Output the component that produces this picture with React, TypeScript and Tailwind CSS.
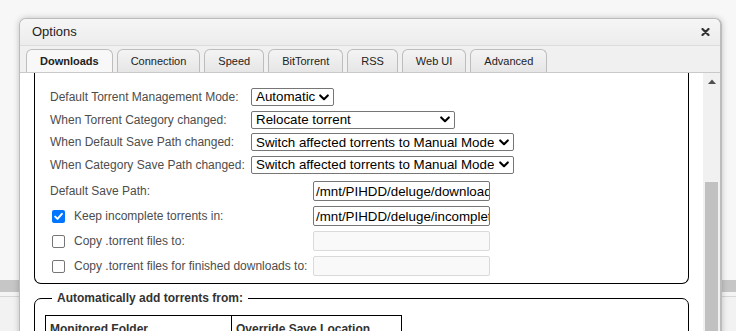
import React from "react";

const Chevron = () => (
  <svg width="10" height="7" viewBox="0 0 10 7" className="shrink-0">
    <path d="M1.2 1.4 L5 5.2 L8.8 1.4" fill="none" stroke="#000" strokeWidth="2.1" strokeLinecap="round" strokeLinejoin="round" />
  </svg>
);

function Select({ value, width }: { value: string; width: string }) {
  return (
    <div className={`${width} h-[18px] flex items-center justify-between border border-[#767676] rounded-[2px] bg-white pl-[4px] pr-[4px] text-[13.33px] leading-none text-black`}>
      <span className="whitespace-nowrap overflow-hidden">{value}</span>
      <Chevron />
    </div>
  );
}

function TextInput({ value, disabled }: { value?: string; disabled?: boolean }) {
  return (
    <div
      className={`w-[177px] h-[20px] flex items-center rounded-[2px] overflow-hidden pl-[2px] text-[13.33px] leading-none text-black whitespace-nowrap ${
        disabled ? "border border-[#dadada] bg-[#f9f9f9]" : "border border-[#767676] bg-white"
      }`}
    >
      {value}
    </div>
  );
}

function Checkbox({ checked }: { checked?: boolean }) {
  return checked ? (
    <div className="w-[13px] h-[13px] rounded-[2px] bg-[#0075ff] flex items-center justify-center">
      <svg width="11" height="11" viewBox="0 0 11 11">
        <path d="M2.2 5.6 L4.5 7.9 L8.9 2.8" fill="none" stroke="#fff" strokeWidth="2" strokeLinecap="round" strokeLinejoin="round" />
      </svg>
    </div>
  ) : (
    <div className="w-[13px] h-[13px] rounded-[2px] border border-[#767676] bg-white" />
  );
}

const tabs = ["Downloads", "Connection", "Speed", "BitTorrent", "RSS", "Web UI", "Advanced"];

export default function App() {
  return (
    <div className="relative w-[736px] h-[331px] overflow-hidden bg-[#f7f7f7] font-['Liberation_Sans',Arial,sans-serif]">
      {/* background page */}
      <div className="flex flex-col h-full">
        <div className="h-[280px]" />
        <div className="h-[12px] bg-[#c6c6c6]" />
        <div className="h-[5px] bg-[#f4f4f4] border-b border-[#d6d6d6]" />
        <div className="flex-1 bg-[#f2f2f2]" />
      </div>

      {/* dialog */}
      <div className="absolute left-[19px] top-[18px] w-[703px] h-[330px] flex flex-col rounded-t-[7px] border border-[#bcbcbc] border-r-[2px] bg-[#efefef] shadow-[0_0_6px_rgba(0,0,0,0.22)] overflow-hidden">
        {/* title */}
        <div className="h-[27px] shrink-0 flex items-center justify-between pl-[12px] pr-[10px] bg-gradient-to-b from-[#f6f6f6] to-[#ececec] border-b border-[#dcdcdc]">
          <span className="text-[13px] text-[#222]">Options</span>
          <svg width="9" height="8" viewBox="0 0 9 8">
            <path d="M1.5 1 L7.5 7 M7.5 1 L1.5 7" stroke="#333" strokeWidth="2.2" strokeLinecap="round" />
          </svg>
        </div>
        {/* tabs */}
        <div className="h-[27px] shrink-0 flex items-end gap-[4px] pl-[6px] bg-[#f0f0f0] border-b border-[#c9c9c9]">
          {tabs.map((t, i) => (
            <div
              key={t}
              className={`h-[23px] flex items-center px-[13px] rounded-t-[6px] border border-b-0 border-[#bdbdbd] text-[11px] text-[#222] ${
                i === 0 ? "bg-[#f8f8f8] font-bold" : "bg-gradient-to-b from-[#f4f4f4] to-[#e6e6e6]"
              }`}
            >
              {t}
            </div>
          ))}
        </div>
        {/* content */}
        <div className="flex-1 flex bg-white">
          <div className="flex-1 flex flex-col pl-[14px] pr-[14px]">
            {/* fieldset 1 (top scrolled off) */}
            <div className="w-[655px] border-x border-b border-black rounded-b-[7px] pl-[15px] pt-[15px] pb-[7px] flex flex-col">
              <div className="flex flex-col gap-[4.67px]">
                {[
                  ["Default Torrent Management Mode:", "Automatic", "w-[83px]"],
                  ["When Torrent Category changed:", "Relocate torrent", "w-[204px]"],
                  ["When Default Save Path changed:", "Switch affected torrents to Manual Mode", "w-[263px]"],
                  ["When Category Save Path changed:", "Switch affected torrents to Manual Mode", "w-[263px]"],
                ].map(([label, value, w]) => (
                  <div key={label} className="flex items-center h-[18px]">
                    <span className="w-[201px] shrink-0 text-[12px] text-[#4d4d4d] whitespace-nowrap">{label}</span>
                    <Select value={value} width={w} />
                  </div>
                ))}
              </div>
              <div className="flex flex-col gap-[5px] mt-[7.5px]">
                <div className="flex items-center h-[20px]">
                  <span className="w-[263px] shrink-0 text-[12px] text-[#4d4d4d]">Default Save Path:</span>
                  <TextInput value="/mnt/PIHDD/deluge/downloads" />
                </div>
                {[
                  ["Keep incomplete torrents in:", true, "/mnt/PIHDD/deluge/incomplete"],
                  ["Copy .torrent files to:", false, ""],
                  ["Copy .torrent files for finished downloads to:", false, ""],
                ].map(([label, checked, value]) => (
                  <div key={label as string} className="flex items-center h-[20px]">
                    <div className="w-[263px] shrink-0 flex items-center pl-[2px]">
                      <Checkbox checked={checked as boolean} />
                      <span className="ml-[9px] text-[12px] text-[#4d4d4d] whitespace-nowrap">{label as string}</span>
                    </div>
                    <TextInput value={value as string} disabled={!checked} />
                  </div>
                ))}
              </div>
            </div>
            {/* fieldset 2 */}
            <fieldset className="w-[655px] mt-[5px] border border-black rounded-t-[7px] pl-[10px] pt-[8px] h-[60px]">
              <legend className="ml-[7px] px-[5px] text-[12px] font-bold text-[#333]">Automatically add torrents from:</legend>
              <div className="flex w-[357px] border border-black">
                <div className="w-[186px] border-r border-black pl-[4px] pt-[4px] h-[30px] text-[12px] font-bold text-[#333]">Monitored Folder</div>
                <div className="flex-1 pl-[4px] pt-[4px] text-[12px] font-bold text-[#333]">Override Save Location</div>
              </div>
            </fieldset>
          </div>
          {/* scrollbar */}
          <div className="w-[17px] shrink-0 bg-[#f1f1f1] flex flex-col items-center">
            <div className="h-[17px] flex items-center justify-center">
              <svg width="8" height="5" viewBox="0 0 8 5">
                <path d="M0 5 L4 0.5 L8 5 Z" fill="#505050" />
              </svg>
            </div>
            <div className="mt-[92px] w-[13px] flex-1 bg-[#c1c1c1]" />
          </div>
        </div>
      </div>
    </div>
  );
}
